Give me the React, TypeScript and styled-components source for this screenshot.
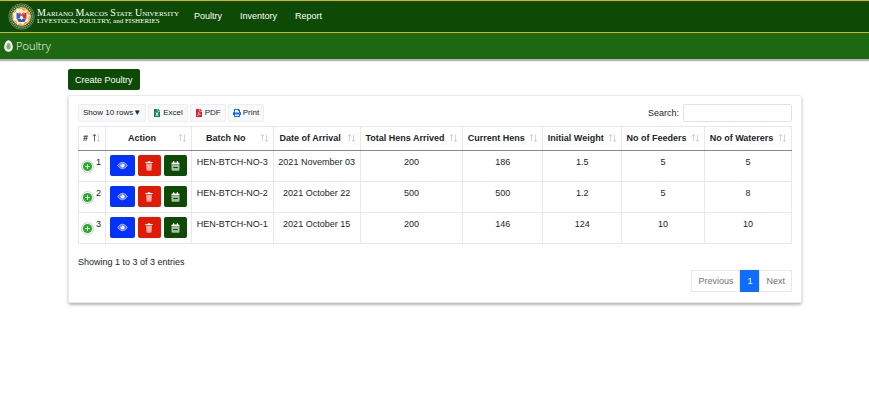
import React, { useState } from "react";
import styled, { createGlobalStyle, css } from "styled-components";
import { FaFileExcel, FaFilePdf, FaPrint } from "react-icons/fa";

const GlobalStyle = createGlobalStyle`
  *, *::before, *::after { box-sizing: border-box; }
  body {
    margin: 0;
    background: #fff;
    color: #212529;
    font-family: "Liberation Sans", Arial, sans-serif;
    font-size: 9px;
    line-height: 14px;
  }
  button, input { font: inherit; color: inherit; }
  button { cursor: pointer; }
  svg { flex: none; }
`;

const Navbar = styled.header`
  display: flex;
  align-items: center;
  height: 33px;
  padding-left: 8px;
  background: #0c4a05;
  border-top: 1px solid #d9b80c;
  border-bottom: 1px solid #d9b80c;
`;

const Brand = styled.a`
  display: flex;
  align-items: center;
  gap: 2px;
  width: 176px;
  color: #fff;
  text-decoration: none;
  white-space: nowrap;
`;

const BrandText = styled.span`
  font-family: "Liberation Serif", "Times New Roman", serif;
  line-height: 9px;
`;

const University = styled.span`
  display: block;
  font-size: 10px;
  font-variant: small-caps;
`;

const Department = styled.span`
  display: block;
  font-size: 7px;
`;

const NavLinks = styled.nav`
  display: flex;
  gap: 18px;
  margin-left: 10px;
  padding-bottom: 2px;
`;

const NavLink = styled.a`
  color: #fff;
  text-decoration: none;
`;

const TitleBar = styled.div`
  display: flex;
  align-items: center;
  gap: 3px;
  height: 26px;
  padding-left: 4px;
  background: #1c6911;
  box-shadow: 0 2px 1px #b4b4b4;
`;

const PageTitle = styled.h1`
  margin: 0;
  color: #fff;
  font: 300 11px/16px "Open Sans", "Noto Sans", sans-serif;
`;

const Content = styled.main`
  padding: 10px 67px 20px 68px;
`;

const CreateButton = styled.button`
  height: 21px;
  padding: 0 7px;
  color: #fff;
  background: #0c4a05;
  border: 0;
  border-radius: 2px;
`;

const Card = styled.section`
  margin-top: 5px;
  padding: 8px 9px 10px;
  border: 1px solid #e9e9e9;
  border-radius: 3px;
  box-shadow: 0 2px 3px rgba(0, 0, 0, 0.28);
`;

const Toolbar = styled.div`
  display: flex;
  align-items: center;
  justify-content: space-between;
`;

const ExportGroup = styled.div`
  display: flex;
  gap: 2px;
`;

const ExportButton = styled.button`
  display: flex;
  align-items: center;
  gap: 2px;
  height: 18px;
  padding: 0 4px;
  font-size: 8px;
  white-space: nowrap;
  background: #f8f9fa;
  border: 1px solid #eceef0;
  border-radius: 2px;
`;

const Tint = styled.span<{ $color: string }>`
  display: flex;
  font-size: 8px;
  color: ${(p) => p.$color};

  svg {
    width: auto;
  }
`;

const SearchLabel = styled.label`
  display: flex;
  align-items: center;
  gap: 4px;
`;

const SearchInput = styled.input`
  width: 109px;
  height: 18px;
  padding: 0 4px;
  background: #fff;
  border: 1px solid #dfe3e8;
  border-radius: 2px;
  outline: 0;
`;

const Table = styled.table`
  width: 100%;
  margin-top: 4px;
  border-collapse: collapse;
  table-layout: fixed;
  text-align: center;
`;

const Col = styled.col<{ $share: number }>`
  width: ${(p) => (p.$share / 714) * 100}%;
`;

const HeadCell = styled.th`
  height: 24px;
  padding: 0 0 2px;
  border: 1px solid #e6e8ea;
  border-bottom-color: #85898d;
`;

const SortButton = styled.button`
  display: flex;
  align-items: center;
  gap: 3px;
  width: 100%;
  padding: 0 4px 0 3px;
  background: none;
  border: 0;
  font-weight: bold;
  white-space: nowrap;
`;

const SortLabel = styled.span`
  flex: 1;
  text-align: center;
`;

const Cell = styled.td`
  height: 31px;
  padding: 4px 0 0;
  border: 1px solid #e6e8ea;
  vertical-align: top;
  white-space: nowrap;
`;

const RowNumber = styled.div`
  display: flex;
  gap: 2px;
  padding-left: 2px;
`;

const ExpandButton = styled.button`
  display: flex;
  margin-top: 5px;
  padding: 0;
  background: none;
  border: 0;
`;

const Actions = styled.div`
  display: flex;
  justify-content: center;
  gap: 3px;
`;

const tones = { blue: "#0431fb", red: "#e01a04", green: "#0c4a05" };

const ActionButton = styled.button<{ $tone: keyof typeof tones }>`
  display: flex;
  align-items: center;
  justify-content: center;
  width: 23px;
  height: 21px;
  padding: 0;
  color: #fff;
  background: ${(p) => tones[p.$tone]};
  border: 0;
  border-radius: 2px;
  ${(p) =>
    p.$tone === "blue" &&
    css`
      width: 25px;
    `}
`;

const Summary = styled.p`
  margin: 11px 0 1px;
`;

const Pagination = styled.nav`
  display: flex;
  justify-content: flex-end;
`;

const PageButton = styled.button<{ $active?: boolean }>`
  height: 22px;
  padding: 0 6px;
  color: ${(p) => (p.$active ? "#fff" : "#6c757d")};
  background: ${(p) => (p.$active ? "#0d6efd" : "#fff")};
  border: 1px solid ${(p) => (p.$active ? "#0d6efd" : "#e6e9ec")};
`;

const Seal = () => (
  <svg width="27" height="27" viewBox="0 0 54 54" aria-hidden="true">
    <circle cx="27" cy="27" r="25.5" fill="#24501c" stroke="#7f946f" strokeWidth="1.5" />
    <circle cx="27" cy="27" r="21.5" fill="none" stroke="#b5bda0" strokeWidth="3.5" strokeDasharray="2 2.2" />
    <circle cx="27" cy="27" r="18" fill="#f2a71b" stroke="#f7e6b0" strokeWidth="1.5" />
    <path d="M27 11l4 5 7-2 0 7 6 4-4 5 1 7-7 1-4 6-5-4-6 3-2-7-7-2 2-7-3-6 7-3 1-7 7 2z" fill="#fff3cf" />
    <path d="M17 19l8 3v8l-8 2z" fill="#3262c9" />
    <path d="M37 19l-8 3v8l8 2z" fill="#d8323c" />
    <path d="M18 32l7-1 2 3 2-3 7 1-3 6h-12z" fill="#3c55c4" />
    <path d="M22 18l5 4 5-4-2 8h-6z" fill="#e8505b" />
    <circle cx="27" cy="29" r="3" fill="#fff" />
  </svg>
);

const EggIcon = () => (
  <svg width="9" height="12" viewBox="0 0 18 24" aria-hidden="true">
    <path d="M9 .5C4.500.5.5 8 .5 14.500a8.500 9 0 0 0 17 0C17.500 8 13.500.5 9 .5z" fill="#fff" />
    <path d="M9 5.500c-2.500 0-4.500 5-4.500 8.500a4.500 5 0 0 0 9 0c0-3.500-2-8.500-4.500-8.500z" fill="#86aa7e" />
  </svg>
);

const SortArrows = ({ ascending }: { ascending?: boolean }) => (
  <svg width="9" height="9" viewBox="0 0 9 9" fill="none" aria-hidden="true">
    <path d="M2.500 8.500V1.500M.8 3.200L2.500 1.200L4.200 3.200" stroke={ascending ? "#55595d" : "#cfd1d3"} strokeWidth=".9" />
    <path d="M6.500 1.500V8.500M4.900 6.800L6.500 8.700L8.200 6.800" stroke="#cfd1d3" strokeWidth=".9" />
  </svg>
);

const PlusIcon = () => (
  <svg width="13" height="13" viewBox="0 0 13 13" aria-hidden="true">
    <circle cx="6.500" cy="6.500" r="5.900" fill="#fff" stroke="#c4c4c4" strokeWidth=".9" />
    <circle cx="6.500" cy="6.500" r="4.600" fill="#25ac2d" />
    <path d="M6.500 4.200v4.600M4.200 6.500h4.600" stroke="#fff" strokeWidth=".9" />
  </svg>
);

const EyeIcon = () => (
  <svg width="11" height="9" viewBox="0 0 20 16" aria-hidden="true">
    <path d="M1 8Q5 2 10 2T19 8Q15 14 10 14T1 8z" fill="#fff" fillOpacity=".3" stroke="#fff" strokeOpacity=".65" strokeWidth="1.500" />
    <circle cx="10" cy="8" r="3.800" fill="#fff" />
    <circle cx="8.600" cy="6.700" r="1.400" fill="#7c92fd" />
  </svg>
);

const TrashIcon = () => (
  <svg width="8" height="10" viewBox="0 0 16 20" aria-hidden="true">
    <path d="M2 5h12l-1 13q0 1.500-1.500 1.500h-7Q3 19.500 3 18z" fill="#f3a097" />
    <path d="M5.500 8v8.500M8 8v8.500M10.500 8v8.500" stroke="#f8c8c2" strokeWidth="1" />
    <path d="M.5 2h4.500L6 .5h4L11 2h4.500v2.200H.5z" fill="#fff" />
  </svg>
);

const CalendarIcon = () => (
  <svg width="9" height="10" viewBox="0 0 18 20" aria-hidden="true">
    <path d="M1 7h16v10.500q0 2-2 2H3q-2 0-2-2z" fill="#a8bfa5" />
    <path d="M1 6.500V4.500Q1 3 2.500 3H4V.5h2.500V3h5V.5H14V3h1.500Q17 3 17 4.500v2z" fill="#fff" />
    <path d="M4.500 13h9" stroke="#0c4a05" strokeWidth="2.200" />
  </svg>
);

const columns: [string, number][] = [
  ["#", 27],
  ["Action", 86],
  ["Batch No", 82],
  ["Date of Arrival", 87],
  ["Total Hens Arrived", 103],
  ["Current Hens", 80],
  ["Initial Weight", 79],
  ["No of Feeders", 83],
  ["No of Waterers", 87],
];

const batches = [
  ["HEN-BTCH-NO-3", "2021 November 03", "200", "186", "1.5", "5", "5"],
  ["HEN-BTCH-NO-2", "2021 October 22", "500", "500", "1.2", "5", "8"],
  ["HEN-BTCH-NO-1", "2021 October 15", "200", "146", "124", "10", "10"],
];

export default function App() {
  const [query, setQuery] = useState("");
  return (
    <>
      <GlobalStyle />
      <Navbar>
        <Brand href="#">
          <Seal />
          <BrandText>
            <University>Mariano Marcos State University</University>
            <Department>LIVESTOCK, POULTRY, and FISHERIES</Department>
          </BrandText>
        </Brand>
        <NavLinks>
          <NavLink href="#poultry">Poultry</NavLink>
          <NavLink href="#inventory">Inventory</NavLink>
          <NavLink href="#report">Report</NavLink>
        </NavLinks>
      </Navbar>
      <TitleBar>
        <EggIcon />
        <PageTitle>Poultry</PageTitle>
      </TitleBar>
      <Content>
        <CreateButton type="button">Create Poultry</CreateButton>
        <Card>
          <Toolbar>
            <ExportGroup>
              <ExportButton type="button">Show 10 rows▼</ExportButton>
              <ExportButton type="button">
                <Tint $color="#198754"><FaFileExcel /></Tint>Excel
              </ExportButton>
              <ExportButton type="button">
                <Tint $color="#dc2438"><FaFilePdf /></Tint>PDF
              </ExportButton>
              <ExportButton type="button">
                <Tint $color="#0d6efd"><FaPrint /></Tint>Print
              </ExportButton>
            </ExportGroup>
            <SearchLabel>
              Search:
              <SearchInput type="search" value={query} onChange={(e) => setQuery(e.target.value)} />
            </SearchLabel>
          </Toolbar>
          <Table>
            <colgroup>
              {columns.map(([name, share]) => <Col key={name} $share={share} />)}
            </colgroup>
            <thead>
              <tr>
                {columns.map(([name], i) => (
                  <HeadCell key={name} scope="col">
                    <SortButton type="button">
                      <SortLabel>{name}</SortLabel>
                      <SortArrows ascending={i === 0} />
                    </SortButton>
                  </HeadCell>
                ))}
              </tr>
            </thead>
            <tbody>
              {batches.map((batch, i) => (
                <tr key={batch[0]}>
                  <Cell>
                    <RowNumber>
                      <ExpandButton type="button" aria-label="Expand row"><PlusIcon /></ExpandButton>
                      {i + 1}
                    </RowNumber>
                  </Cell>
                  <Cell>
                    <Actions>
                      <ActionButton type="button" $tone="blue" aria-label="View"><EyeIcon /></ActionButton>
                      <ActionButton type="button" $tone="red" aria-label="Delete"><TrashIcon /></ActionButton>
                      <ActionButton type="button" $tone="green" aria-label="Schedule"><CalendarIcon /></ActionButton>
                    </Actions>
                  </Cell>
                  {batch.map((value, j) => <Cell key={j}>{value}</Cell>)}
                </tr>
              ))}
            </tbody>
          </Table>
          <Summary>Showing 1 to 3 of 3 entries</Summary>
          <Pagination aria-label="Table pages">
            <PageButton type="button" disabled>Previous</PageButton>
            <PageButton type="button" $active aria-current="page">1</PageButton>
            <PageButton type="button" disabled>Next</PageButton>
          </Pagination>
        </Card>
      </Content>
    </>
  );
}
